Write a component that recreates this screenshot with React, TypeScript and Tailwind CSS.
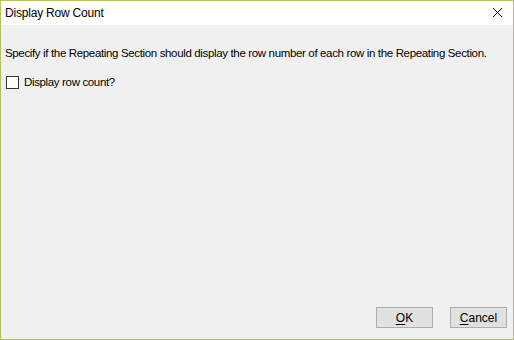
export default function App() {
  return (
    <div
      className="w-[514px] h-[340px] border border-[#b7c05f] flex flex-col text-black text-[12px]"
      style={{ fontFamily: '"Liberation Sans", Arial, sans-serif' }}
    >
      {/* Title bar */}
      <div className="h-[24px] bg-white flex items-center justify-between pl-[4px] pr-[10px]">
        <span className="leading-none tracking-[-0.2px]">Display Row Count</span>
        <svg width="11" height="11" viewBox="0 0 11 11" className="mt-[-2px]">
          <path d="M1 1 L10 10 M10 1 L1 10" stroke="#000" strokeWidth="1" />
        </svg>
      </div>

      {/* Body */}
      <div className="flex-1 bg-[#f0f0f0] flex flex-col px-[4px] text-[11.5px] tracking-[-0.35px]">
        <p className="mt-[21px] leading-[14px] whitespace-nowrap">
          Specify if the Repeating Section should display the row number of each row in the Repeating Section.
        </p>
        <label className="mt-[15px] flex items-center gap-[5px] pl-[1px]">
          <span className="w-[13px] h-[13px] border border-[#333333] bg-white" />
          <span className="leading-[14px]">Display row count?</span>
        </label>

        <div className="mt-auto mb-[11px] flex justify-end gap-[17px] pr-[2px] text-[12px] tracking-normal">
          <button className="w-[57px] h-[21px] bg-[#e1e1e1] border border-[#adadad] leading-none">
            <span className="underline underline-offset-2">O</span>K
          </button>
          <button className="w-[57px] h-[21px] bg-[#e1e1e1] border border-[#adadad] leading-none">
            <span className="underline underline-offset-2">C</span>ancel
          </button>
        </div>
      </div>
    </div>
  );
}
